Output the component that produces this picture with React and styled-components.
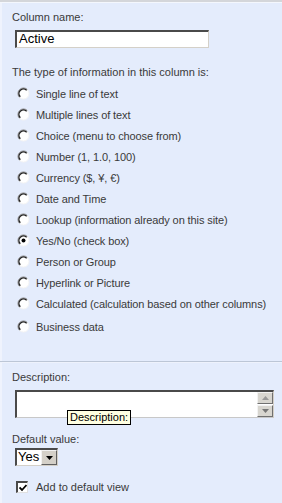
import React from "react";
import styled, { createGlobalStyle } from "styled-components";

const GlobalStyle = createGlobalStyle`
  html, body {
    margin: 0;
    padding: 0;
    background: #e4ecfc;
  }
  body {
    font-family: "Liberation Sans", Arial, sans-serif;
  }
`;

const Panel = styled.div`
  width: 282px;
  min-height: 503px;
  box-sizing: border-box;
  background: #e4ecfc;
  border-top: 2px solid #d4d6da;
  box-shadow: inset 0 1px 0 #f4f7fd, inset 2px 0 0 #eff3fd;
  display: flex;
  flex-direction: column;
`;

const Section = styled.div`
  display: flex;
  flex-direction: column;
  align-items: flex-start;
  padding: ${(p) => p.$pad};
  border-bottom: ${(p) => (p.$divider ? "1px solid #bcc6d6" : "none")};
  box-shadow: ${(p) => (p.$divider ? "0 1px 0 #eef2fc" : "none")};
`;

const Label = styled.div`
  font-size: 11px;
  line-height: 14px;
  color: #3a3a3a;
  margin-left: 12px;
  margin-top: ${(p) => p.$mt || 0}px;
`;

const TextInput = styled.div`
  margin: 6px 0 0 15px;
  width: 194px;
  height: 18px;
  box-sizing: border-box;
  background: #fff;
  border-style: solid;
  border-width: 2px 1px 1px 2px;
  border-color: #4a4a4a #d4d0c8 #d4d0c8 #4a4a4a;
  font-size: 13px;
  line-height: 14px;
  padding-left: 2px;
  color: #000;
`;

const RadioList = styled.div`
  display: flex;
  flex-direction: column;
  margin-top: 4px;
`;

const Row = styled.label`
  display: flex;
  align-items: center;
  gap: 6px;
  height: 21px;
  padding-left: 17px;
  margin-top: ${(p) => p.$mt || 0}px;
  font-size: 11px;
  color: #3a3a3a;
  letter-spacing: -0.1px;
`;

const Radio = ({ checked }) => (
  <svg width="13" height="13" viewBox="0 0 13 13">
    <circle cx="6.5" cy="6.5" r="5.5" fill="#fff" />
    <path d="M2.6 10.4 A5.5 5.5 0 0 1 10.4 2.6" fill="none" stroke="#808080" strokeWidth="1" />
    <path d="M3.3 9.7 A4.5 4.5 0 0 1 9.7 3.3" fill="none" stroke="#222" strokeWidth="1.4" />
    <path d="M10.4 2.6 A5.5 5.5 0 0 1 2.6 10.4" fill="none" stroke="#f4f4f4" strokeWidth="1" />
    {checked && <circle cx="6.5" cy="6.5" r="2" fill="#000" />}
  </svg>
);

const AreaWrap = styled.div`
  position: relative;
  margin: 6px 0 0 15px;
  width: 259px;
  height: 28px;
  box-sizing: border-box;
  background: #fff;
  border-style: solid;
  border-width: 2px 1px 1px 2px;
  border-color: #4a4a4a #d4d0c8 #c8c8c8 #4a4a4a;
  display: flex;
  justify-content: flex-end;
`;

const ScrollBar = styled.div`
  width: 16px;
  display: flex;
  flex-direction: column;
  gap: 1px;
`;

const ArrowButton = styled.div`
  flex: 1;
  background: #d8d6d0;
  border-style: solid;
  border-width: 1px;
  border-color: #f2f2f2 #707070 #707070 #f2f2f2;
  display: flex;
  align-items: center;
  justify-content: center;
`;

const Tooltip = styled.div`
  position: absolute;
  left: 50px;
  top: 18px;
  background: #ffffe1;
  border: 1px solid #000;
  font-size: 11px;
  line-height: 13px;
  padding: 0 2px;
  color: #000;
`;

const Select = styled.div`
  margin: 2px 0 0 15px;
  width: 43px;
  height: 18px;
  box-sizing: border-box;
  background: #fff;
  border-style: solid;
  border-width: 2px 1px 1px 2px;
  border-color: #4a4a4a #d4d0c8 #d4d0c8 #4a4a4a;
  display: flex;
  align-items: stretch;
  justify-content: space-between;
  font-size: 13px;
  line-height: 14px;
  color: #000;
  padding-left: 1px;
`;

const DropButton = styled.div`
  width: 14px;
  background: #d4d0c8;
  border-style: solid;
  border-width: 1px;
  border-color: #f2f2f2 #606060 #606060 #f2f2f2;
  display: flex;
  align-items: center;
  justify-content: center;
`;

const CheckRow = styled.label`
  display: flex;
  align-items: center;
  gap: 8px;
  margin: 15px 0 0 16px;
  font-size: 11px;
  color: #3a3a3a;
`;

const CheckBox = styled.div`
  width: 12px;
  height: 12px;
  box-sizing: border-box;
  background: #fff;
  border-style: solid;
  border-width: 2px 1px 1px 2px;
  border-color: #4a4a4a #e0e0e0 #e0e0e0 #4a4a4a;
  display: flex;
  align-items: center;
  justify-content: center;
`;

const Tri = ({ up }) => (
  <svg width="7" height="4" viewBox="0 0 7 4">
    <path d={up ? "M0 4 L3.5 0 L7 4 Z" : "M0 0 L3.5 4 L7 0 Z"} fill={up ? "#999" : "#777"} />
  </svg>
);

const types = [
  "Single line of text",
  "Multiple lines of text",
  "Choice (menu to choose from)",
  "Number (1, 1.0, 100)",
  "Currency ($, ¥, €)",
  "Date and Time",
  "Lookup (information already on this site)",
  "Yes/No (check box)",
  "Person or Group",
  "Hyperlink or Picture",
  "Calculated (calculation based on other columns)",
  "Business data",
];

export default function App() {
  return (
    <>
      <GlobalStyle />
      <Panel>
        <Section $pad="8px 0 24px 0" $divider>
          <Label>Column name:</Label>
          <TextInput>Active</TextInput>
          <Label $mt={17}>The type of information in this column is:</Label>
          <RadioList>
            {types.map((t, i) => (
              <Row key={t} $mt={i === types.length - 1 ? 2 : 0}>
                <Radio checked={t.startsWith("Yes/No")} />
                {t}
              </Row>
            ))}
          </RadioList>
        </Section>
        <Section $pad="8px 0 12px 0">
          <Label>Description:</Label>
          <AreaWrap>
            <ScrollBar>
              <ArrowButton>
                <Tri up />
              </ArrowButton>
              <ArrowButton>
                <Tri />
              </ArrowButton>
            </ScrollBar>
            <Tooltip>Description:</Tooltip>
          </AreaWrap>
          <Label $mt={14}>Default value:</Label>
          <Select>
            <span>Yes</span>
            <DropButton>
              <svg width="7" height="4" viewBox="0 0 7 4">
                <path d="M0 0 L3.5 4 L7 0 Z" fill="#000" />
              </svg>
            </DropButton>
          </Select>
          <CheckRow>
            <CheckBox>
              <svg width="8" height="8" viewBox="0 0 8 8">
                <path d="M0.5 3.5 L3 6 L7.5 1" fill="none" stroke="#000" strokeWidth="1.8" />
              </svg>
            </CheckBox>
            Add to default view
          </CheckRow>
        </Section>
      </Panel>
    </>
  );
}
